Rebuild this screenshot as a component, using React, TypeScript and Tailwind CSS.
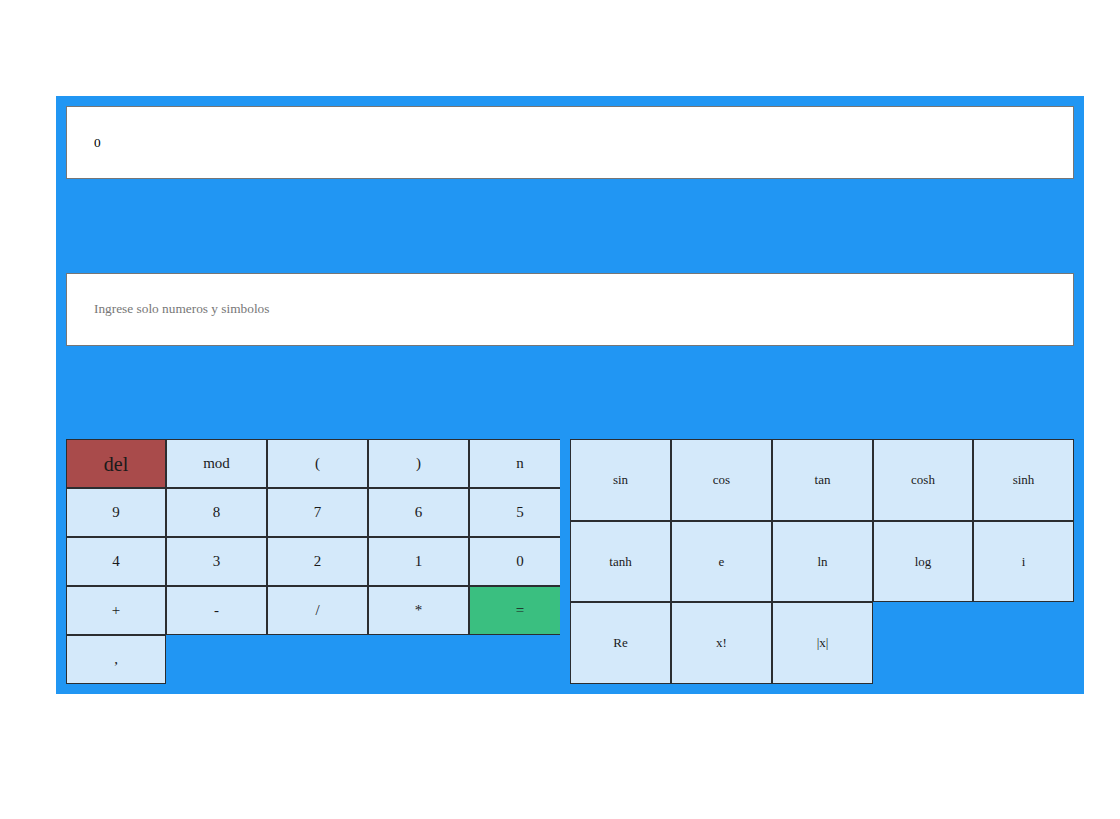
const leftKeys = [
  "del", "mod", "(", ")", "n",
  "9", "8", "7", "6", "5",
  "4", "3", "2", "1", "0",
  "+", "-", "/", "*", "=",
  ",",
]

const rightKeys = ["sin", "cos", "tan", "cosh", "sinh", "tanh", "e", "ln", "log", "i", "Re", "x!", "|x|"]

const serif = "font-['Liberation_Serif',serif]"

export default function App() {
  return (
    <div className={`min-h-[819px] bg-white pt-[96px] ${serif}`}>
      <div className="ml-[56px] w-[1028px] bg-[#2196f3] p-[10px]">
        <input
          readOnly
          value="0"
          className={`block h-[73px] w-full border border-[#767676] bg-white pl-[27px] pt-[1px] text-[13.33px] text-black outline-none ${serif}`}
        />
        <input
          placeholder="Ingrese solo numeros y simbolos"
          className={`mt-[94px] block h-[73px] w-full border border-[#767676] bg-white pb-[1px] pl-[27px] text-[13.33px] text-black outline-none placeholder:text-[#777] ${serif}`}
        />
        <div className="mt-[93px] flex gap-[10px]">
          <div className="w-[494px] overflow-hidden">
            <div className="grid w-[505px] grid-cols-[100px_101px_101px_101px_102px] grid-rows-[repeat(5,49px)]">
              {leftKeys.map((k) => (
                <button
                  key={k}
                  className={`border border-[#2b2d30] ${serif} ${
                    k === "del"
                      ? "bg-[#a94b4b] text-[20px] text-[#1a1a1a]"
                      : k === "="
                        ? "bg-[#3abf80] text-[15px] text-[#1a1a1a]"
                        : "bg-[#d4e9fa] text-[15px] text-[#1a1a1a]"
                  }`}
                >
                  {k}
                </button>
              ))}
            </div>
          </div>
          <div className="grid w-[504px] grid-cols-[101px_101px_101px_100px_101px] grid-rows-[82px_81px_82px]">
            {rightKeys.map((k) => (
              <button key={k} className={`border border-[#2b2d30] bg-[#d4e9fa] text-[13px] text-[#1a1a1a] ${serif}`}>
                {k}
              </button>
            ))}
          </div>
        </div>
      </div>
    </div>
  )
}
